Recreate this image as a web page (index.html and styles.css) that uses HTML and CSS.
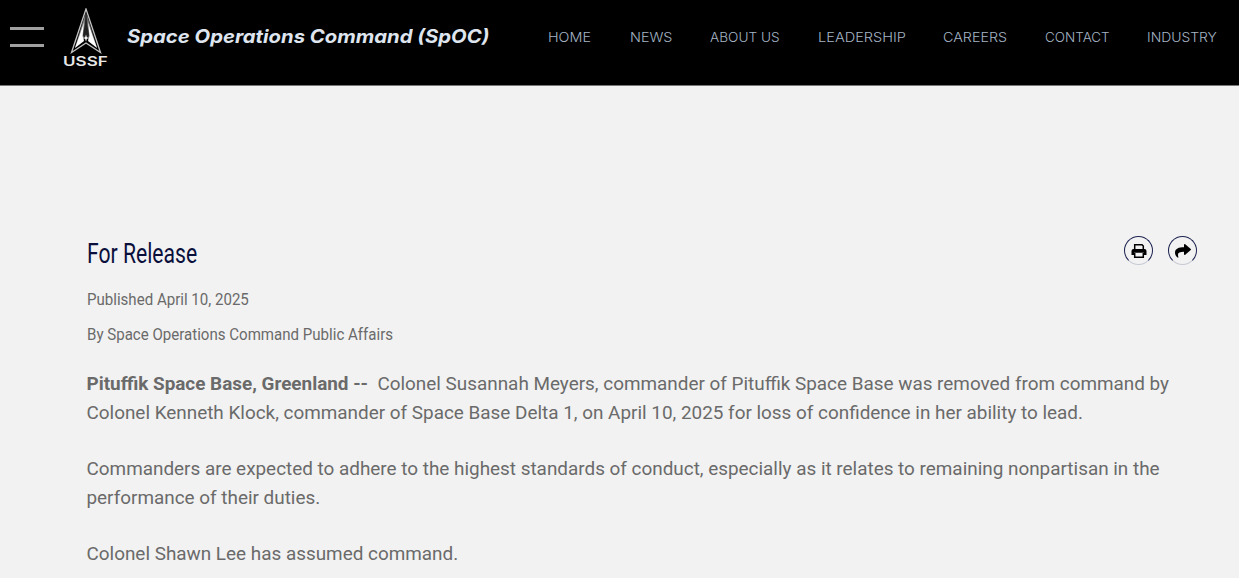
FILE: index.html
```
<!DOCTYPE html>
<html lang="en">
<head>
    <meta charset="UTF-8">
    <meta name="viewport" content="width=device-width, initial-scale=1.0">
    <title>For Release</title>
    <link rel="stylesheet" href="styles.css">
</head>
<body>
    <header class="site-header">
        <button class="menu-toggle" aria-label="Menu">
            <span></span>
            <span></span>
        </button>
        <a class="logo" href="#">
            <svg class="logo-delta" viewBox="0 0 32 46" width="32" height="46">
                <path d="M16 1 L1.5 44.5 L16 35 L30.5 44.5 Z" fill="none" stroke="#c4c4c4" stroke-width="1.3"/>
                <path d="M15.500 5 L5 39.500 L13 33 L15.500 28 Z" fill="#777"/>
                <path d="M16.500 5 L27 39.500 L19 33 L16.500 28 Z" fill="#666"/>
                <path d="M14 14 L12.500 28 L14 33 L5 40 L10 26 Z" fill="#fff"/>
                <path d="M18 14 L19.500 28 L18 33 L27 40 L22 26 Z" fill="#fff"/>
                <path d="M16 9 L13 27 L16 34 L19 27 Z" fill="#222"/>
                <path d="M16 26.500 L16.800 29.200 L19 30 L16.800 30.800 L16 33.500 L15.200 30.800 L13 30 L15.200 29.200 Z" fill="#fff"/>
            </svg>
            <span class="logo-text">USSF</span>
        </a>
        <a class="site-title" href="#"><span>Space Operations Command (SpOC)</span></a>
        <nav class="main-nav">
            <a class="nav-home" href="#">HOME</a>
            <a class="nav-news" href="#">NEWS</a>
            <a class="nav-about" href="#">ABOUT US</a>
            <a class="nav-leadership" href="#">LEADERSHIP</a>
            <a class="nav-careers" href="#">CAREERS</a>
            <a class="nav-contact" href="#">CONTACT</a>
            <a class="nav-industry" href="#">INDUSTRY</a>
        </nav>
    </header>

    <main class="article">
        <div class="article-head">
            <h1><span>For Release</span></h1>
            <div class="actions">
                <button class="action" aria-label="Print">
                    <svg viewBox="0 0 16 16" width="16" height="16">
                        <path d="M3.700 6V1.700H11L12.300 3V6" fill="none" stroke="#000" stroke-width="1.500"/>
                        <path d="M2.500 6h11A2 2 0 0 1 15.500 8v4h-2.500v-2.200H3V12H.5V8A2 2 0 0 1 2.500 6z"/>
                        <path d="M3.700 10v4.300h8.600V10" fill="none" stroke="#000" stroke-width="1.500"/>
                    </svg>
                </button>
                <button class="action" aria-label="Share">
                    <svg viewBox="0 0 512 512" width="16" height="16">
                        <path d="M503.700 226.200l-176 151.900c-15.400 13.300-39.700 2.500-39.700-18.200V280C127 281 66 314 108 447c5 16-14 28-28 18C37 434 0 376 0 317 0 171 122 138 288 136V56c0-20.700 24.300-31.500 39.700-18.200l176 152c11.100 9.600 11.100 26.800 0 36.400z"/>
                    </svg>
                </button>
            </div>
        </div>
        <p class="meta meta-date"><span>Published April 10, 2025</span></p>
        <p class="meta meta-author"><span>By Space Operations Command Public Affairs</span></p>

        <div class="article-body">
            <p><strong>Pituffik Space Base, Greenland --</strong>&nbsp; Colonel Susannah Meyers, commander of Pituffik Space Base was removed from command by<br>Colonel Kenneth Klock, commander of Space Base Delta 1, on April 10, 2025 for loss of confidence in her ability to lead.</p>
            <p>Commanders are expected to adhere to the highest standards of conduct, especially as it relates to remaining nonpartisan in the<br>performance of their duties.</p>
            <p>Colonel Shawn Lee has assumed command.</p>
        </div>
    </main>
</body>
</html>
```
FILE: styles.css
```
* {
    box-sizing: border-box;
}
body {
    margin: 0;
    background-color: #f2f2f2;
    font-family: Roboto, sans-serif;
    color: #6a6a6a;
    overflow: hidden;
}
a {
    color: inherit;
    text-decoration: none;
}
button {
    padding: 0;
    background: none;
    border: none;
    cursor: pointer;
}
.site-header {
    display: flex;
    align-items: flex-start;
    height: 86px;
    background-color: #000;
    border-bottom: 1px solid #777;
}
.menu-toggle {
    display: flex;
    flex-direction: column;
    gap: 14px;
    width: 34px;
    margin: 27px 0 0 10px;
}
.menu-toggle span {
    height: 3px;
    background-color: #a0a0a0;
}
.logo {
    display: flex;
    flex-direction: column;
    align-items: center;
    width: 44px;
    margin: 8px 0 0 20px;
}
.logo-delta {
    display: block;
}
.logo-text {
    margin: 1px 1px 0 0;
    font-family: Inter, sans-serif;
    font-size: 12.5px;
    font-weight: 600;
    line-height: 14px;
    color: #e8e8e8;
    transform: scaleX(1.36);
}
.site-title {
    width: 421.5px;
    margin: 23px 0 0 18.5px;
    font-family: Inter, sans-serif;
    font-size: 18.5px;
    font-style: italic;
    font-weight: 700;
    line-height: 26px;
    color: #dfe5ee;
    white-space: nowrap;
}
.site-title span {
    display: inline-block;
    transform: scaleX(1.097);
    transform-origin: left;
}
.main-nav {
    display: flex;
    gap: 38px;
    margin-top: 29px;
    font-family: Inter, sans-serif;
    font-size: 13px;
    font-weight: 300;
    line-height: 16px;
    color: #a5b5c5;
    white-space: nowrap;
}
.main-nav a {
    transform-origin: left;
}
.nav-home {
    width: 43.5px;
    transform: scaleX(1.103);
}
.nav-news {
    width: 42px;
    transform: scaleX(1.105);
}
.nav-about {
    width: 70px;
    transform: scaleX(1.05);
}
.nav-leadership {
    width: 87.5px;
    transform: scaleX(1.12);
}
.nav-careers {
    width: 63.5px;
    transform: scaleX(1.1);
}
.nav-contact {
    width: 64px;
    transform: scaleX(1.035);
}
.nav-industry {
    width: 70px;
    transform: scaleX(1.07);
}
.article {
    padding: 149px 42px 0 86.5px;
}
.article-head {
    display: flex;
    justify-content: space-between;
    align-items: flex-start;
}
h1 {
    margin: 0;
    font-size: 28px;
    font-weight: 400;
    line-height: 38px;
    color: #0a0f3c;
}
h1 span,
.meta span {
    display: inline-block;
    transform-origin: left;
    white-space: nowrap;
}
h1 span {
    transform: scaleX(.755);
}
.actions {
    display: flex;
    gap: 15px;
    margin-top: 1px;
}
.action {
    display: flex;
    justify-content: center;
    align-items: center;
    width: 29px;
    height: 29px;
    border: 1px solid #1c2350;
    border-bottom-color: #c8cad4;
    border-radius: 50%;
}
.meta {
    margin: 0;
    font-size: 17px;
    line-height: 35px;
}
.meta span {
    transform: scaleX(.886);
}
.meta-date {
    margin-top: 9px;
}
.article-body {
    margin-top: 17px;
    font-size: 18.9px;
    line-height: 29px;
    white-space: nowrap;
}
.article-body p {
    margin: 0 0 27px;
}
```
